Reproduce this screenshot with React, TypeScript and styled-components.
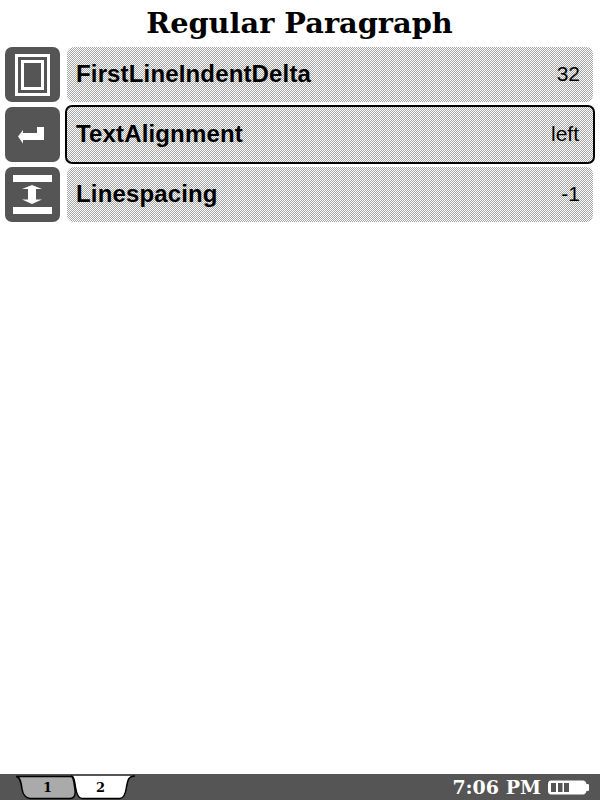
import React from "react";
import styled, { createGlobalStyle } from "styled-components";

const Global = createGlobalStyle`
  html, body { margin: 0; padding: 0; background: #fff; }
  #root { width: 600px; height: 800px; }
`;

const Page = styled.div`
  width: 600px;
  height: 800px;
  display: flex;
  flex-direction: column;
  overflow: hidden;
  background: #fff;
  color: #000;
`;

const Title = styled.h1`
  margin: 0;
  height: 47px;
  padding-right: 1px;
  font: bold 28.8px/47px "DejaVu Serif", serif;
  text-align: center;
  flex: none;
`;

const List = styled.div`
  flex: 1;
  display: flex;
  flex-direction: column;
  gap: 5px;
  padding: 0 5px;
`;

const Row = styled.div`
  display: flex;
  gap: 7px;
  height: 55px;
  align-items: center;
`;

const IconBox = styled.div`
  width: 55px;
  height: 55px;
  flex: none;
  background: #555;
  border-radius: 7px;
  display: flex;
  align-items: center;
  justify-content: center;
`;

const Item = styled.div<{ $selected?: boolean }>`
  flex: none;
  box-sizing: border-box;
  display: flex;
  align-items: center;
  justify-content: space-between;
  font-family: "Liberation Sans", Arial, sans-serif;
  border-radius: 7px;
  background: conic-gradient(#a6a6a6 25%, #fff 0 50%, #a6a6a6 0 75%, #fff 0) 0 0 / 2px 2px;
  width: ${(p) => (p.$selected ? 530 : 526)}px;
  height: ${(p) => (p.$selected ? 59 : 55)}px;
  margin: 0 ${(p) => (p.$selected ? -2 : 0)}px;
  padding: 0 ${(p) => (p.$selected ? 14 : 13)}px 2px 9px;
  border: ${(p) => (p.$selected ? "2px solid #000" : "none")};
`;

const Name = styled.span`
  font-weight: bold;
  font-size: 24px;
  letter-spacing: 0.15px;
`;

const Value = styled.span`
  font-size: 21px;
`;

const StatusBar = styled.div`
  flex: none;
  height: 26px;
  background: #555;
  display: flex;
  align-items: stretch;
  justify-content: space-between;
`;

const Tabs = styled.div`
  position: relative;
  width: 140px;
  height: 26px;
`;

const TabLabel = styled.span<{ $x: number }>`
  position: absolute;
  top: 6px;
  left: ${(p) => p.$x}px;
  font: bold 13px/15px "DejaVu Serif", serif;
  color: #000;
`;

const Clock = styled.div`
  display: flex;
  align-items: center;
  gap: 7px;
  padding-right: 11px;
  color: #fff;
  font: bold 19px/26px "DejaVu Serif", serif;
`;

const ico = { display: "block" } as const;

const FrameIcon = () => (
  <svg width="35" height="42" viewBox="0 0 35 42" style={ico}>
    <rect x="1.5" y="1.5" width="32" height="39" fill="none" stroke="#fff" strokeWidth="3" />
    <rect x="7.5" y="7.5" width="20" height="27" fill="none" stroke="#fff" strokeWidth="3" />
  </svg>
);

const ReturnIcon = () => (
  <svg width="26" height="17" viewBox="0 0 26 17" style={{ display: "block", margin: "1px 3px 0 0" }}>
    <path d="M19 0H26V13H5V16.5L0 9.5L5 3V6H19Z" fill="#fff" />
  </svg>
);

const SpacingIcon = () => (
  <svg width="39" height="39" viewBox="0 0 39 39" style={ico}>
    <rect x="0" y="0" width="39" height="7" fill="#fff" />
    <rect x="0" y="32" width="39" height="7" fill="#fff" />
    <path d="M19 10L29 14H23V24.5H29L19 29L9 24.5H15V14H9Z" fill="#fff" />
  </svg>
);

const TabShapes = () => (
  <svg width="140" height="26" viewBox="0 0 140 26" style={{ position: "absolute", left: 0, top: 0 }}>
    <path d="M71 2C74 2 74.5 7 75.5 13C76.5 20 78 24.5 82 24.5H120C124 24.5 125.5 20 126.5 13C127.5 7 128 2 135 2V2Z" fill="#fff" />
    <path d="M71 2C74 2 74.5 7 75.5 13C76.5 20 78 24.5 82 24.5H120C124 24.5 125.5 20 126.5 13C127.5 7 128 2 135 2" fill="none" stroke="#000" strokeWidth="1.5" />
    <path d="M16 2.5C20 2.5 21 8 22 15C23 21 25 24 30 24.5H70C74 24.5 76 21 75 16C74 10 74 2.5 71 2.5Z" fill="#aaa" stroke="#000" strokeWidth="1.5" />
  </svg>
);

const BatteryIcon = () => (
  <svg width="41" height="15" viewBox="0 0 41 15" style={ico}>
    <path d="M3 0.5H35C37 0.5 38 2 38.5 4H40C41 4 41 5 41 6V9C41 10 41 11 40 11H38.5C38 13 37 14.5 35 14.5H3C1 14.5 0 13 0 11.5V3.5C0 2 1 0.5 3 0.5Z" fill="#fff" />
    <rect x="3" y="3" width="5" height="9" fill="#555" />
    <rect x="10" y="3" width="4.5" height="9" fill="#555" />
    <rect x="16" y="3" width="5" height="9" fill="#555" />
  </svg>
);

const rows = [
  { name: "FirstLineIndentDelta", value: "32", icon: <FrameIcon /> },
  { name: "TextAlignment", value: "left", icon: <ReturnIcon />, selected: true },
  { name: "Linespacing", value: "-1", icon: <SpacingIcon /> },
];

export default function App() {
  return (
    <Page>
      <Global />
      <Title>Regular Paragraph</Title>
      <List>
        {rows.map((r) => (
          <Row key={r.name}>
            <IconBox>{r.icon}</IconBox>
            <Item $selected={r.selected}>
              <Name>{r.name}</Name>
              <Value>{r.value}</Value>
            </Item>
          </Row>
        ))}
      </List>
      <StatusBar>
        <Tabs>
          <TabShapes />
          <TabLabel $x={43}>1</TabLabel>
          <TabLabel $x={96}>2</TabLabel>
        </Tabs>
        <Clock>
          <span>7:06 PM</span>
          <BatteryIcon />
        </Clock>
      </StatusBar>
    </Page>
  );
}
